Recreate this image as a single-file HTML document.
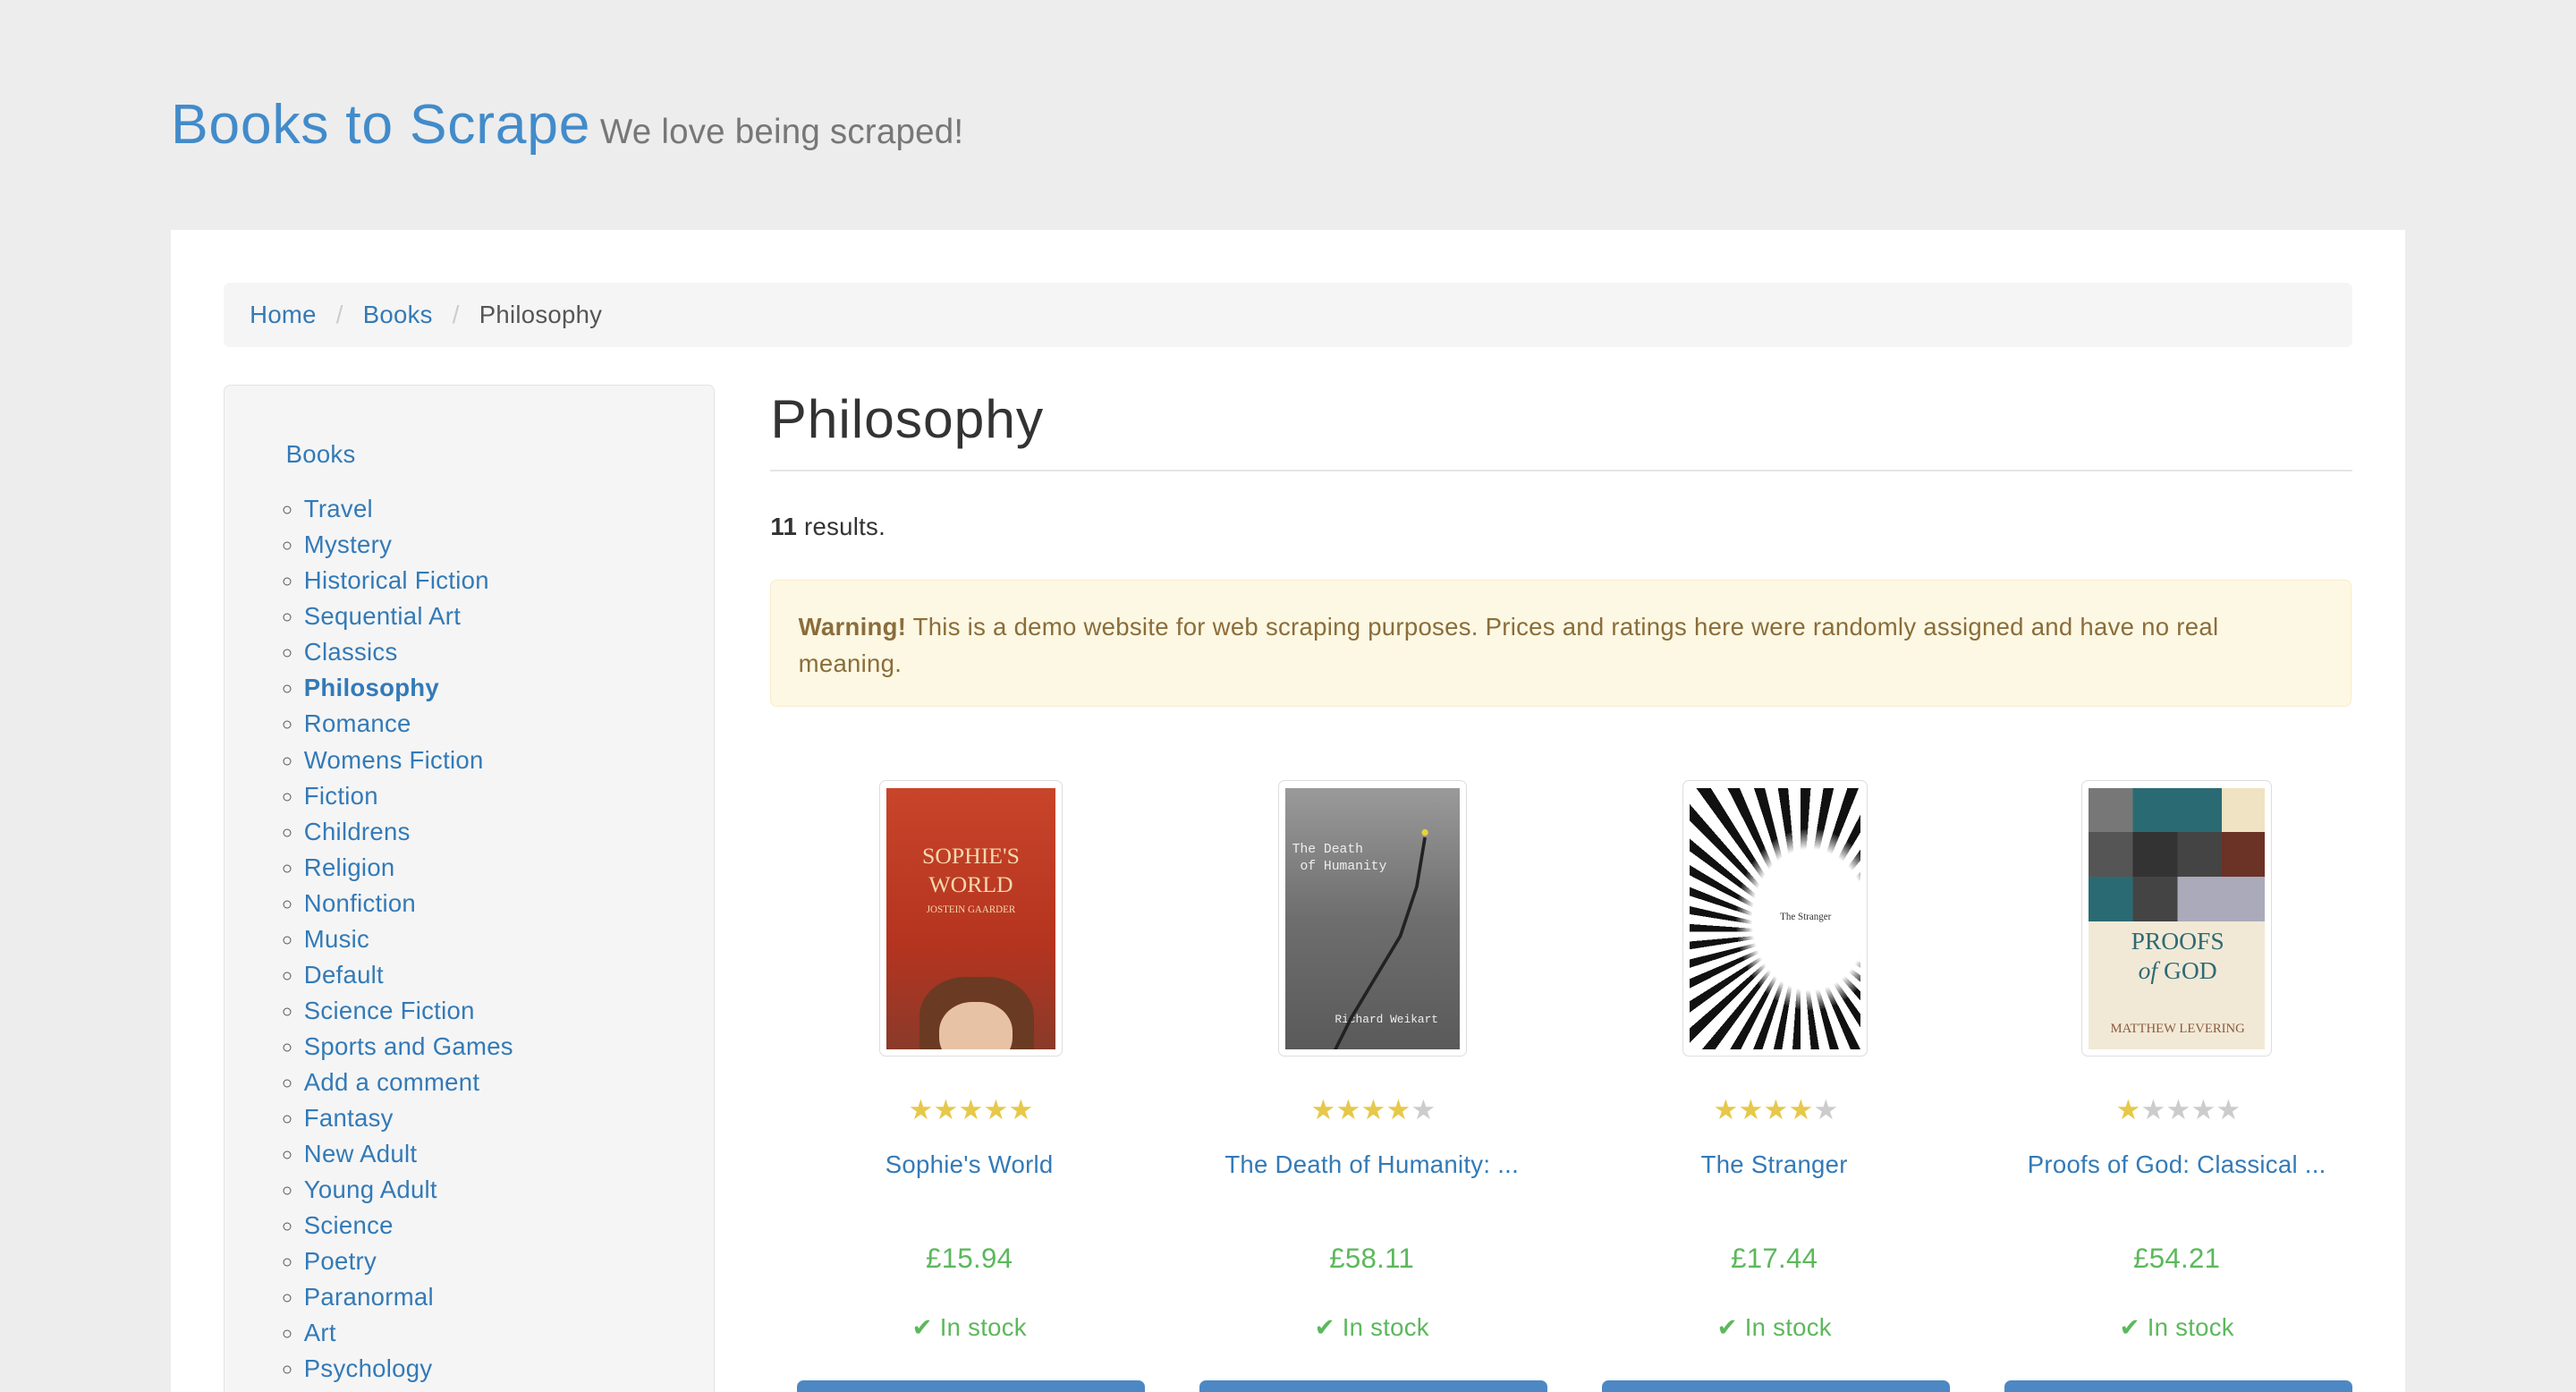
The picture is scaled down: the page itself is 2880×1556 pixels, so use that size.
<!DOCTYPE html>
<html><head><meta charset="utf-8"><style>
html,body{margin:0;padding:0;background:#ededed;overflow:hidden;}
body{width:2880px;height:1556px;overflow:hidden;font-family:"Liberation Sans",sans-serif;}
#z{zoom:1.83673;width:1568px;height:847px;position:relative;overflow:hidden;letter-spacing:0.15px;}
.a{position:absolute;white-space:nowrap;}
a,.lk{color:#337ab7;text-decoration:none;}
.cover{position:absolute;top:475px;height:168px;background:#fff;border:1px solid #ddd;border-radius:4px;box-sizing:border-box;}
.cover>div{position:absolute;left:4px;right:4px;top:4px;bottom:4px;overflow:hidden;letter-spacing:0;}
.stars{position:absolute;top:666px;font-size:17px;letter-spacing:0px;transform:translateX(-50%);}
.y{color:#e6c84a}.g{color:#ccc}
.t{position:absolute;top:700px;font-size:15px;color:#337ab7;transform:translateX(-50%);white-space:nowrap;}
.p{position:absolute;top:756px;font-size:17px;color:#5cb85c;transform:translateX(-50%);}
.s{position:absolute;top:799px;font-size:15px;color:#5cb85c;transform:translateX(-50%);white-space:nowrap;}
.b{position:absolute;top:840px;width:212px;height:20px;background:#4d88c4;border-radius:4px;}
ul{list-style:circle;margin:0;padding:0;}
</style></head><body><div id="z">
<div class="a" style="left:104px;top:56px;font-size:34px;color:#428bca;letter-spacing:0.4px;">Books to Scrape <span style="font-size:21px;color:#777;letter-spacing:0.1px;margin-left:-4px;">We love being scraped!</span></div>
<div style="position:absolute;left:104px;top:140px;width:1360px;height:720px;background:#fff;"></div>
<div style="position:absolute;left:136px;top:172px;width:1296px;height:39px;background:#f5f5f5;border-radius:4px;"></div>
<div class="a" style="left:152px;top:183px;font-size:15px;"><span class="lk">Home</span><span style="color:#ccc;padding:0 12px;">/</span><span class="lk">Books</span><span style="color:#ccc;padding:0 12px;">/</span><span style="color:#555">Philosophy</span></div>
<div style="position:absolute;left:136px;top:234px;width:298px;height:640px;background:#f5f5f5;border:1px solid #e3e3e3;border-radius:4px;"></div>
<div class="a lk" style="left:174px;top:268px;font-size:15px;">Books</div>
<ul style="position:absolute;left:185px;top:299px;font-size:15px;line-height:21.8px;color:#555;">
<li><a>Travel</a></li><li><a>Mystery</a></li><li><a>Historical Fiction</a></li><li><a>Sequential Art</a></li><li><a>Classics</a></li><li><a style="font-weight:bold">Philosophy</a></li><li><a>Romance</a></li><li><a>Womens Fiction</a></li><li><a>Fiction</a></li><li><a>Childrens</a></li><li><a>Religion</a></li><li><a>Nonfiction</a></li><li><a>Music</a></li><li><a>Default</a></li><li><a>Science Fiction</a></li><li><a>Sports and Games</a></li><li><a>Add a comment</a></li><li><a>Fantasy</a></li><li><a>New Adult</a></li><li><a>Young Adult</a></li><li><a>Science</a></li><li><a>Poetry</a></li><li><a>Paranormal</a></li><li><a>Art</a></li><li><a>Psychology</a></li></ul>
<div class="a" style="left:469px;top:236px;font-size:33px;color:#333;letter-spacing:0.5px;">Philosophy</div>
<div style="position:absolute;left:469px;top:286px;width:963px;height:1px;background:#e5e5e5;"></div>
<div class="a" style="left:469px;top:312px;font-size:15px;color:#333;"><b>11</b> results.</div>
<div style="position:absolute;left:469px;top:353px;width:961px;height:76px;background:#fcf8e3;border:1px solid #faebcc;border-radius:4px;"></div>
<div style="position:absolute;left:486px;top:371px;width:910px;font-size:15px;line-height:22px;color:#8a6d3b;"><b>Warning!</b> This is a demo website for web scraping purposes. Prices and ratings here were randomly assigned and have no real meaning.</div>

<div class="cover" style="left:535px;width:112px;"><div style="background:linear-gradient(#c8452a,#b5341f 60%,#8a3a2a);color:#f3d9b0;font-family:'Liberation Serif',serif;text-align:center;"><div style="margin-top:33px;font-size:14px;line-height:17px;">SOPHIE'S<br>WORLD</div><div style="font-size:6px;margin-top:4px;">JOSTEIN GAARDER</div><div style="position:absolute;left:20px;top:115px;width:70px;height:60px;border-radius:40% 40% 0 0;background:#6b3a22;"></div><div style="position:absolute;left:32px;top:130px;width:45px;height:40px;border-radius:45%;background:#e7c2a4;"></div></div></div>
<div class="cover" style="left:778px;width:115px;"><div style="background:linear-gradient(#9a9a9a,#6e6e6e 50%,#5a5a5a);color:#eee;font-family:'Liberation Mono',monospace;"><div style="position:absolute;left:4px;top:33px;font-size:8px;line-height:10px;">The Death<br>&nbsp;of Humanity</div><div style="position:absolute;left:30px;top:137px;font-size:7px;">Richard Weikart</div><svg style="position:absolute;left:0;top:0" width="107" height="160"><path d="M85 30 L80 60 L70 90 L55 115 L40 140 L30 160" stroke="#222" stroke-width="2" fill="none"/><circle cx="85" cy="27" r="2" fill="#e8d23a"/></svg></div></div>
<div class="cover" style="left:1024px;width:113px;"><div style="background:repeating-conic-gradient(from 0deg at 65% 55%,#111 0deg 4deg,#fff 4deg 9deg);"><div style="position:absolute;left:28px;top:25px;width:90px;height:110px;border-radius:50%;background:radial-gradient(#fff 55%,rgba(255,255,255,0) 72%);"></div><div style="position:absolute;left:55px;top:75px;font-size:6px;font-family:'Liberation Serif',serif;color:#333;">The Stranger</div></div></div>
<div class="cover" style="left:1267px;width:116px;"><div style="background:#f1e9d6;"><div style="position:absolute;left:0;top:0;width:108px;height:81px;background:linear-gradient(90deg,#777 0 25%,#2a6b73 25% 75%,#efe3c3 75%);"></div><div style="position:absolute;left:0;top:27px;width:108px;height:27px;background:linear-gradient(90deg,#555 0 25%,#333 25% 50%,#444 50% 75%,#6b3226 75%);"></div><div style="position:absolute;left:0;top:54px;width:108px;height:27px;background:linear-gradient(90deg,#2a6b73 0 25%,#444 25% 50%,#aab 50%);"></div><div style="position:absolute;left:0;width:108px;top:84px;text-align:center;color:#2f6a74;font-family:'Liberation Serif',serif;font-size:15px;line-height:18px;">PROOFS<br><i>of</i> GOD</div><div style="position:absolute;left:0;width:108px;top:142px;text-align:center;color:#8a5a40;font-family:'Liberation Serif',serif;font-size:8px;">MATTHEW LEVERING</div></div></div>

<div class="stars" style="left:591px"><span class="y">★★★★★</span></div>
<div class="stars" style="left:836px"><span class="y">★★★★</span><span class="g">★</span></div>
<div class="stars" style="left:1081px"><span class="y">★★★★</span><span class="g">★</span></div>
<div class="stars" style="left:1326px"><span class="y">★</span><span class="g">★★★★</span></div>
<div class="t" style="left:590px">Sophie's World</div>
<div class="t" style="left:835px">The Death of Humanity: ...</div>
<div class="t" style="left:1080px">The Stranger</div>
<div class="t" style="left:1325px">Proofs of God: Classical ...</div>
<div class="p" style="left:590px">£15.94</div><div class="p" style="left:835px">£58.11</div><div class="p" style="left:1080px">£17.44</div><div class="p" style="left:1325px">£54.21</div>
<div class="s" style="left:590px">✔ In stock</div><div class="s" style="left:835px">✔ In stock</div><div class="s" style="left:1080px">✔ In stock</div><div class="s" style="left:1325px">✔ In stock</div>
<div class="b" style="left:485px"></div><div class="b" style="left:730px"></div><div class="b" style="left:975px"></div><div class="b" style="left:1220px"></div>
</div></body></html>
